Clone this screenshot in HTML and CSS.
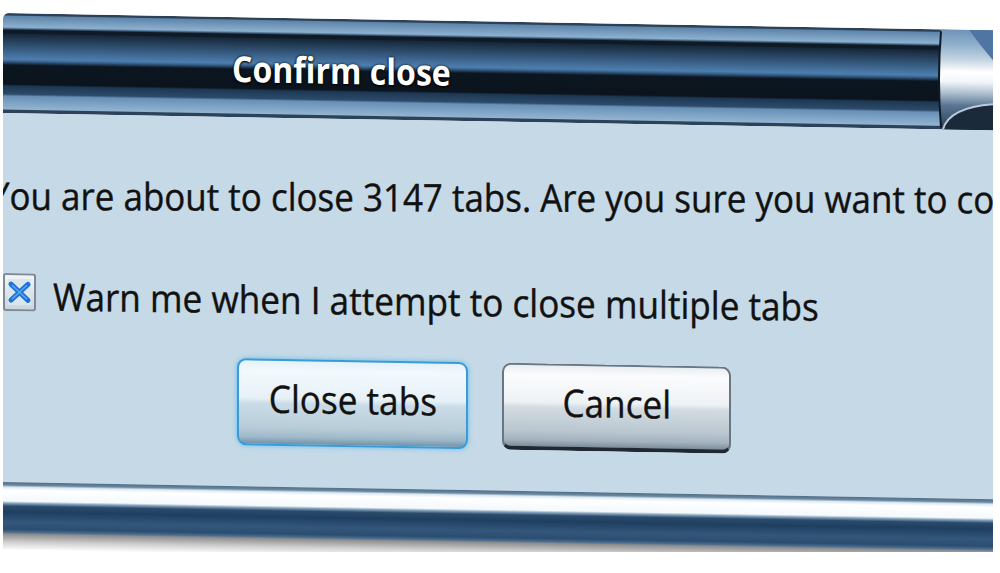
FILE: index.html
```html
<!DOCTYPE html>
<html lang="en">
<head>
  <meta charset="UTF-8" />
  <title>Confirm close</title>
  <link rel="stylesheet" href="styles.css">
</head>
<body>
  <div class="dialog">
    <div class="titlebar">
      <span class="title"><span class="squeeze">Confirm close</span></span>
      <svg class="caption-cap" width="58" height="100" viewBox="0 0 58 100">
        <defs>
          <linearGradient id="capGloss" x1="0" y1="0" x2="0" y2="1">
            <stop offset="0" stop-color="#6f93b8"/>
            <stop offset="0.15" stop-color="#8fb0cc"/>
            <stop offset="0.3" stop-color="#c4d4e2"/>
            <stop offset="0.42" stop-color="#ffffff"/>
            <stop offset="0.52" stop-color="#f2f6fa"/>
            <stop offset="0.64" stop-color="#a9bccd"/>
            <stop offset="0.76" stop-color="#5a7591"/>
            <stop offset="1" stop-color="#2a3f56"/>
          </linearGradient>
        </defs>
        <path d="M6 0 H58 V100 H6 Q2 50 6 0 Z" fill="url(#capGloss)"/>
        <path d="M34 0 H58 V30 Q44 14 34 0 Z" fill="#4f75a2"/>
        <path d="M8 100 Q14 78 58 74 V100 Z" fill="#1b2a3a"/>
        <path d="M8 100 Q14 78 58 74" fill="none" stroke="#b8cadb" stroke-width="2"/>
        <path d="M6 2 Q2 50 6 98" fill="none" stroke="#0f1a26" stroke-width="2"/>
      </svg>
    </div>

    <div class="dialog-body">
      <p class="message"><span class="squeeze">You are about to close 3147 tabs. Are you sure you want to continue?</span></p>

      <label class="warn-row">
        <svg class="checkbox" width="33" height="38" viewBox="0 0 33 38">
          <defs>
            <linearGradient id="boxFill" x1="0" y1="0" x2="0" y2="1">
              <stop offset="0" stop-color="#f3f6f8"/>
              <stop offset="1" stop-color="#c9d4dc"/>
            </linearGradient>
          </defs>
          <rect x="1" y="1" width="31" height="36" rx="2" fill="url(#boxFill)" stroke="#7f8b96" stroke-width="2"/>
          <rect x="5" y="6" width="23" height="26" fill="#dbe5ec"/>
          <path d="M8 11 L25 27 M25 11 L8 27" stroke="#1d72d4" stroke-width="5" stroke-linecap="round"/>
          <path d="M9 12 L24 26 M24 12 L9 26" stroke="#5aa6f0" stroke-width="1.5"/>
        </svg>
        <span class="squeeze">Warn me when I attempt to close multiple tabs</span>
      </label>

      <div class="buttons">
        <button class="btn btn-default"><span class="squeeze">Close tabs</span></button>
        <button class="btn btn-cancel"><span class="squeeze">Cancel</span></button>
      </div>
    </div>

    <div class="frame-bottom"></div>
  </div>
</body>
</html>
```

FILE: styles.css
```css
:root {
  --content-color: #c5d9e6;
  --text-color: #111;
}

body {
  margin: 0;
  background: #fff;
  color: var(--text-color);
  font-family: "Open Sans", "DejaVu Sans", sans-serif;
  overflow: hidden;
}

/* the whole window is photographed slightly tilted */
.dialog {
  width: 990px;
  margin: 13px 0 0 3px;
  overflow: hidden;
  transform: skewY(1deg);
  transform-origin: 0 0;
}

.squeeze {
  display: inline-block;
  white-space: nowrap;
  transform: scaleX(0.925);
  transform-origin: 0 50%;
}

.titlebar {
  height: 100px;
  display: flex;
  border-top-left-radius: 6px;
  background: linear-gradient(to bottom,
    #2d4156 0, #2d4156 2px,
    #5d85ab 3px, #8db0ce 14px,
    #5f82a4 15px, #0e1a26 17px, #0e1a26 20px,
    #16283a 21px, #4d7eaf 46px,
    #3a6590 48px, #0c1620 52px, #0b141d 71px,
    #1d3854 73px, #2c4b6a 81px,
    #6890b6 83px, #92b4d1 96px,
    #2b4259 97px, #2b4259 100px);
}

.title {
  padding: 32px 0 0 229px;
  font-size: 36px;
  line-height: 40px;
  font-weight: 700;
  color: #fff;
  text-shadow: 0 0 3px #000, 0 1px 2px #000;
}

.title .squeeze {
  transform: scaleX(0.89);
}

.caption-cap {
  margin-left: auto;
  display: block;
}

.dialog-body {
  height: 369px;
  box-sizing: border-box;
  padding-top: 58px;
  background: var(--content-color);
  font-size: 38px;
  line-height: 48px;
  -webkit-text-stroke: 0.4px #111;
}

.message {
  margin: 0 0 0 -13px;
  white-space: nowrap;
  transform: skewY(-0.8deg);
  transform-origin: 0 50%;
}

.message .squeeze {
  transform: scaleX(0.92);
}

.warn-row {
  display: flex;
  align-items: flex-start;
  gap: 17px;
  margin-top: 52px;
  transform: skewY(-0.25deg);
  transform-origin: 0 50%;
}

.checkbox {
  display: block;
  margin-top: 2px;
  flex-shrink: 0;
}

.buttons {
  display: flex;
  gap: 34px;
  margin: 35px 0 0 234px;
}

.btn {
  height: 87px;
  width: 231px;
  box-sizing: border-box;
  padding: 0 0 10px;
  border-radius: 9px;
  font-family: inherit;
  font-size: 38px;
  line-height: 48px;
  color: var(--text-color);
  -webkit-text-stroke: 0.4px #111;
  display: flex;
  align-items: center;
  justify-content: center;
}

.btn .squeeze {
  transform-origin: 50% 50%;
}

.btn-default {
  border: 2px solid #3a9bd6;
  box-shadow: 0 0 5px #62bdf0;
  background: linear-gradient(to bottom,
    #e4f1f9 0, #f3f9fd 12%, #e6f1f7 45%,
    #c9dbe6 52%, #b8cdd9 80%, #9fb8c8 92%, #6f93ab 100%);
}

.btn-cancel {
  width: 229px;
  border: 2px solid #6a7681;
  border-bottom: 4px solid #1f2933;
  background: linear-gradient(to bottom,
    #e9eef1 0, #fbfcfd 12%, #eef2f5 45%,
    #d2dbe1 52%, #bac7d0 80%, #a3b2bd 92%, #7c8c99 100%);
}

.frame-bottom {
  height: 70px;
  background: linear-gradient(to bottom,
    #4f6d88 0, #6a889f 3px, #dbe9f2 5px, #fff 8px, #f4f9fc 19px,
    #8aa6bf 21px, #2a4b6c 24px, #1f3f60 30px, #33577b 40px,
    #2b4d70 47px, #4a6c8e 50px, #8e8e8e 52px, #cfcfcf 60px, #fff 68px);
}
```
